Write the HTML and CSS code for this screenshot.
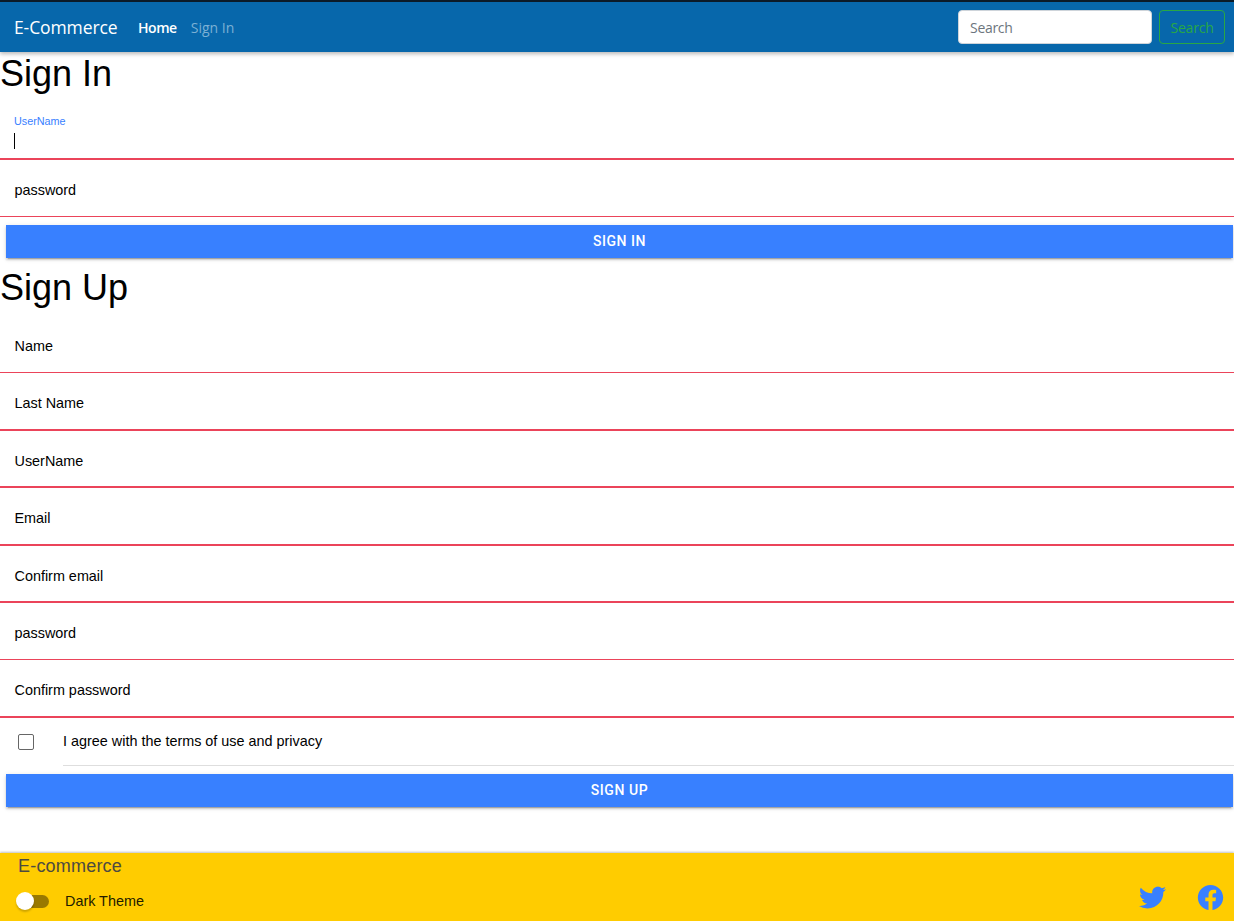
FILE: index.html
```html
<!DOCTYPE html>
<html lang="en">
<head>
<meta charset="utf-8">
<title>E-Commerce</title>
<link rel="stylesheet" href="styles.css">
</head>
<body>
<header class="navbar">
  <a class="brand">E-Commerce</a>
  <nav class="links"><a class="link active">Home</a><a class="link">Sign In</a></nav>
  <form class="search">
    <input class="search-input" type="text" placeholder="Search">
    <button class="search-button" type="button">Search</button>
  </form>
</header>
<main class="content">
  <h1 class="title">Sign In</h1>
  <div class="field focused"><span class="floating">UserName</span><span class="caret"></span></div>
  <div class="field short thin"><span>password</span></div>
  <button class="submit">SIGN IN</button>
  <h1 class="title second">Sign Up</h1>
  <div class="field short thin"><span>Name</span></div>
  <div class="field"><span>Last Name</span></div>
  <div class="field short"><span>UserName</span></div>
  <div class="field"><span>Email</span></div>
  <div class="field short"><span>Confirm email</span></div>
  <div class="field short thin"><span>password</span></div>
  <div class="field"><span>Confirm password</span></div>
  <div class="agree"><span class="checkbox"></span><div class="agree-label"><span class="agree-text">I agree with the terms of use and privacy</span></div></div>
  <button class="submit">SIGN UP</button>
</main>
<footer class="footer">
  <div class="footer-left">
    <div class="footer-title">E-commerce</div>
    <div class="theme"><span class="toggle"><span class="knob"></span></span><span class="theme-label">Dark Theme</span></div>
  </div>
  <div class="social">
    <svg class="icon" viewBox="0 0 512 512"><path d="M496 109.5a201.8 201.8 0 0 1-56.55 15.3 97.51 97.51 0 0 0 43.33-53.6 197.74 197.74 0 0 1-62.56 23.5A99.14 99.14 0 0 0 348.31 64c-54.42 0-98.46 43.4-98.46 96.9a93.21 93.21 0 0 0 2.54 22.1 280.7 280.7 0 0 1-203-101.3A95.69 95.69 0 0 0 36 130.4c0 33.6 17.53 63.3 44 80.7A97.5 97.5 0 0 1 35.22 199v1.2c0 47 34 86.1 79 95a100.76 100.76 0 0 1-25.94 3.4 94.38 94.38 0 0 1-18.51-1.8c12.51 38.5 48.92 66.5 92.05 67.3A199.59 199.59 0 0 1 39.5 405.6a203 203 0 0 1-23.5-1.4A278.68 278.68 0 0 0 166.74 448c181.36 0 280.44-147.7 280.44-275.8 0-4.2-.11-8.4-.31-12.5A198.48 198.48 0 0 0 496 109.5z"/></svg>
    <svg class="icon" viewBox="0 0 512 512"><path d="M480 257.35c0-123.7-100.3-224-224-224s-224 100.3-224 224c0 111.8 81.9 204.47 189 221.29V322.12h-56.89v-64.77H221V208c0-56.13 33.45-87.16 84.61-87.16 24.51 0 50.15 4.38 50.15 4.38v55.13H327.5c-27.81 0-36.51 17.26-36.51 35v42h62.12l-9.92 64.77H291v156.54c107.1-16.81 189-109.48 189-221.31z"/></svg>
  </div>
</footer>
</body>
</html>
```
FILE: styles.css
```css
* { box-sizing: border-box; }
body { margin: 0; height: 921px; overflow: hidden; display: flex; flex-direction: column; background: #fff; color: #000; font: 14.4px/20px "Liberation Sans", Arial, sans-serif; }
.navbar { height: 52px; flex: none; display: flex; align-items: center; padding: 2px 9px 0 14px; border-top: 2px solid #0b1a28; background: #0767ab; box-shadow: 0 2px 4px rgba(0,0,0,.28); font-family: "Open Sans", sans-serif; }
.brand { width: 124px; margin-top: -2px; color: #fff; font-size: 17.5px; letter-spacing: -.1px; }
.links { display: flex; flex: 1; gap: 14px; font-size: 14px; }
.link { color: #7bb0d4; letter-spacing: 0; }
.link.active { color: #fff; font-weight: 600; letter-spacing: -.45px; }
.search { display: flex; gap: 7px; margin-top: -2px; }
.search-input { width: 194px; height: 34px; padding: 1px 11px; border: 1px solid #ced4da; border-radius: 4px; outline: 0; font: 14px "Open Sans", sans-serif; letter-spacing: -.3px; }
.search-input::placeholder { color: #6c757d; }
.search-button { width: 66px; height: 34px; padding: 1px 0; border: 1px solid #28a745; border-radius: 4px; background: none; color: #28a745; font: 14px "Open Sans", sans-serif; letter-spacing: -.2px; }
.content { display: flex; flex-direction: column; height: 801px; flex: none; }
.title { margin: 0; height: 50px; font-size: 36px; line-height: 43px; font-weight: 400; }
.title.second { height: 50px; margin-top: 8px; }
.field { height: 58px; flex: none; padding: 20px 14.5px 0; border-bottom: 2px solid #eb445a; }
.field.short { height: 57px; }
.field.thin { border-bottom-width: 1px; }
.field.focused { display: flex; flex-direction: column; padding: 9px 14px 0; }
.floating { color: #3880ff; font-size: 10.8px; line-height: 20px; }
.caret { width: 1px; height: 16px; margin-top: 2px; background: #000; }
.submit { height: 33px; flex: none; margin: 8px 1px 0 6px; padding: 0; border: 0; background: #3880ff; color: #fff; font: 500 14px/33px Roboto, sans-serif; letter-spacing: .55px; box-shadow: 0 3px 1px -2px rgba(0,0,0,.2), 0 2px 2px rgba(0,0,0,.14), 0 1px 5px rgba(0,0,0,.12); }
.agree { height: 48px; display: flex; flex: none; padding-left: 18px; }
.checkbox { width: 16px; height: 16px; margin: 16px 29px 0 0; border: 1px solid #666; border-radius: 2px; }
.agree-label { flex: 1; padding-top: 13px; border-bottom: 1px solid #dedede; }
.footer { height: 68px; flex: none; display: flex; justify-content: space-between; background: #ffcc00; box-shadow: 0 -1px 2px rgba(0,0,0,.25); }
.footer-left { padding: 3px 0 0 18px; }
.footer-title { color: #4d4a40; font-size: 18px; line-height: 20px; letter-spacing: .2px; }
.theme { display: flex; align-items: center; height: 20px; margin: 15px 0 0; }
.toggle { width: 31px; height: 13px; border-radius: 7px; background: #997900; display: flex; align-items: center; }
.knob { width: 18px; height: 18px; flex: none; margin-left: -2px; border-radius: 50%; background: #fff; box-shadow: 0 2px 2px rgba(0,0,0,.2); }
.theme-label { margin-left: 16px; color: #221b00; }
.social { display: flex; gap: 29px; padding: 30px 9.5px 0 0; }
.icon { width: 29px; height: 29px; fill: #3880ff; }
```
